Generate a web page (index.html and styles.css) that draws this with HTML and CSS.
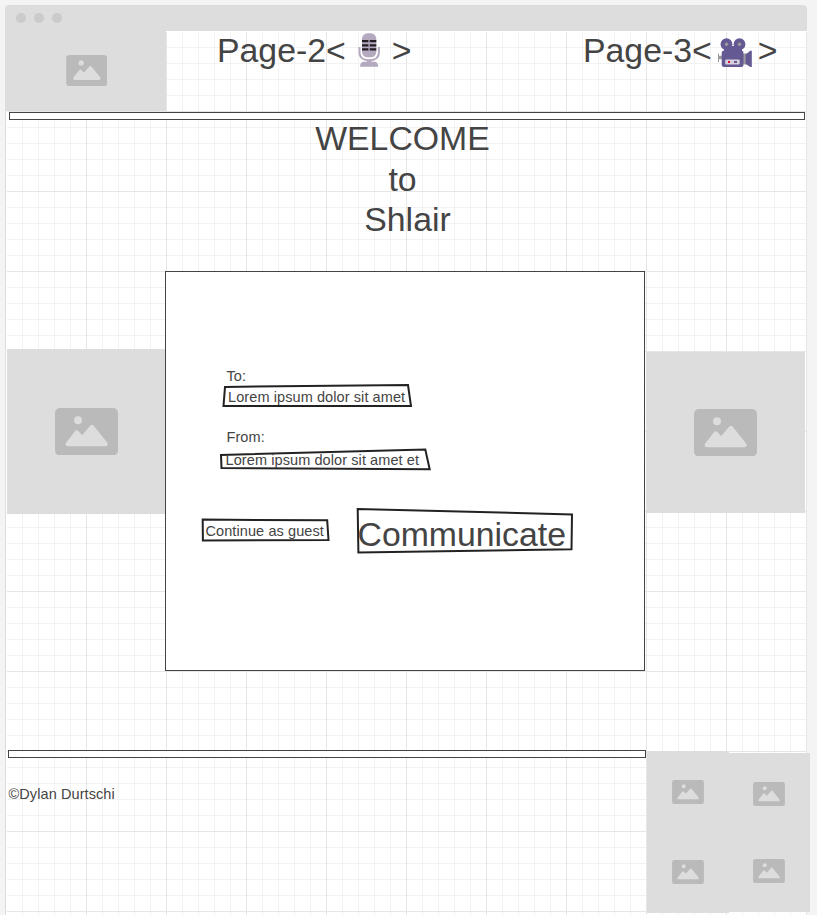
FILE: index.html
```html
<!DOCTYPE html>
<html lang="en">
<head>
<meta charset="utf-8">
<title>Shlair</title>
<link rel="stylesheet" href="styles.css">
</head>
<body>
<svg class="defs" width="0" height="0">
  <symbol id="picture" viewBox="0 0 63 47.5">
    <rect width="63" height="47.5" rx="5" fill="#bababa"/>
    <circle cx="23" cy="12.2" r="4" fill="#ddd"/>
    <path d="M12.8 36 L21.7 24.6 L27.2 30.400 L37 19 L50.600 36 Z" fill="#ddd" stroke="#ddd" stroke-width="4.400" stroke-linejoin="round"/>
  </symbol>
</svg>
<div class="window">
  <div class="titlebar"><i class="dot"></i><i class="dot"></i><i class="dot"></i></div>
  <div class="frame">
    <div class="canvas">
      <header class="header">
        <div class="image logo"><svg><use href="#picture"/></svg></div>
        <nav class="nav">
          <a class="link"><span>Page-2&lt;</span>
            <svg class="mic" width="22" height="34" viewBox="358 33 22 34">
              <rect x="362" y="33.300" width="14.300" height="24" rx="5.500" fill="#b4a9bf"/>
              <path d="M362 41.200h6.400m1.300 0h6.600M362 45.300h6.400m1.300 0h6.600M362 49.300h6.400m1.300 0h6.600" stroke="#231f24" stroke-width="2.200"/>
              <path d="M359.500 47v5.500c0 4.800 4 7.800 9.700 7.800s9.700-3 9.700-7.800V47" fill="none" stroke="#b4a9bf" stroke-width="2"/>
              <path d="M367 60h4.400v1.700h3.300c2 0 3.600 2 3.600 5H360c0-3 1.600-5 3.600-5H367z" fill="#b4a9bf"/>
            </svg>
            <span>&gt;</span></a>
          <a class="link"><span>Page-3&lt;</span>
            <svg class="camera" width="34" height="30" viewBox="718 38 34 30">
              <path d="M718 53.500h1v2.300h3v3.500h-3v2.700h-1zM743 54l3.500-1v12l-3.500-1z" fill="#9b9b9b"/>
              <path d="M724 46h18v6h-18z" fill="#655994"/>
              <circle cx="726.500" cy="44.200" r="5.900" fill="#655994"/>
              <circle cx="739.500" cy="44.200" r="5.900" fill="#655994"/>
              <circle cx="726.500" cy="44.200" r="1.700" fill="#9b9b9b"/>
              <circle cx="739.500" cy="44.200" r="1.700" fill="#9b9b9b"/>
              <rect x="721.700" y="50.500" width="21.800" height="16.500" rx="2.500" fill="#655994"/>
              <path d="M745.600 54.500l4.700-3.800h1.500v16.400h-1.500l-4.700-3.400z" fill="#655994"/>
              <rect x="725.200" y="59.500" width="14.500" height="5" rx="1" fill="#d5d0dc"/>
              <path d="M728 61h2v2h-2z" fill="#d6083b"/>
              <path d="M734 61h3v2h-3z" fill="#655994"/>
            </svg>
            <span>&gt;</span></a>
        </nav>
      </header>
      <div class="rule rule-top"></div>
      <h1 class="hero"><span class="welcome">WELCOME</span><span class="to">to</span><span class="name">Shlair</span></h1>
      <main class="main">
        <div class="image side-left"><svg><use href="#picture"/></svg></div>
        <form class="card">
          <label class="label label-to">To:</label>
          <div class="field field-to">
            <svg class="outline" viewBox="222 383 192 26"><path d="M225 386.900L408 385L411 406H223.500Z"/></svg>
            <span>Lorem ipsum dolor sit amet</span>
          </div>
          <label class="label label-from">From:</label>
          <div class="field field-from">
            <svg class="outline" viewBox="219 447 214 25"><path d="M221 454.900L425.300 449.600L429.700 469.300L221.500 468Z"/></svg>
            <span>Lorem ipsum dolor sit amet et</span>
          </div>
          <div class="actions">
            <div class="field guest">
              <svg class="outline" viewBox="201 517 130 26"><path d="M202.700 519.600L327.200 520.300L328.500 539.900L202.900 540.400Z"/></svg>
              <span>Continue as guest</span>
            </div>
            <div class="field communicate">
              <svg class="outline" viewBox="356 507 218 48"><path d="M357.700 509L572 514.400L571.500 549.200L358.400 552.600Z"/></svg>
              <span>Communicate</span>
            </div>
          </div>
        </form>
        <div class="image side-right"><svg><use href="#picture"/></svg></div>
      </main>
      <footer class="footer">
        <div class="legal">
          <div class="rule rule-bottom"></div>
          <p class="copyright">©Dylan Durtschi</p>
        </div>
        <div class="gallery gallery-a">
          <div class="image"><svg><use href="#picture"/></svg></div>
          <div class="image"><svg><use href="#picture"/></svg></div>
        </div>
        <div class="gallery gallery-b">
          <div class="image"><svg><use href="#picture"/></svg></div>
          <div class="image"><svg><use href="#picture"/></svg></div>
        </div>
      </footer>
    </div>
  </div>
</div>
</body>
</html>
```
FILE: styles.css
```css
* { box-sizing: border-box; }
html { overflow: hidden; }
body {
  margin: 0;
  height: 915px;
  overflow: hidden;
  background: #f4f4f4;
  color: #444;
  font-family: "Liberation Sans", Arial, sans-serif;
  font-size: 14.5px;
  letter-spacing: 0.09px;
}
svg { display: block; flex: none; }
.defs { position: absolute; }
.window { width: 802px; margin: 5px 0 0 5px; }
.titlebar {
  display: flex;
  align-items: center;
  gap: 8px;
  height: 26px;
  padding-left: 10.5px;
  border-radius: 4px 4px 0 0;
  background: #ddd;
}
.dot { width: 10px; height: 10px; border-radius: 50%; background: #cbcbcb; }
.frame {
  height: 884px;
  padding: 1px 0 0 1px;
  border-left: 1px solid #ddd;
  background: #fff;
}
.canvas {
  height: 883px;
  background:
    linear-gradient(to right, #e6e6e6 1px, transparent 1px) -1px -1px / 80px 80px,
    linear-gradient(to bottom, #e6e6e6 1px, transparent 1px) -1px -1px / 80px 80px,
    linear-gradient(to right, #f2f2f2 1px, transparent 1px) -1px -1px / 16px 16px,
    linear-gradient(to bottom, #f2f2f2 1px, transparent 1px) -1px -1px / 16px 16px,
    #fff;
}
.image {
  display: flex;
  align-items: center;
  justify-content: center;
  background: #ddd;
}
.image svg { width: 63px; height: 47.5px; }
.rule { height: 8px; border: 1px solid #444; background: #fff; }

.header { display: flex; height: 80px; }
.logo { width: 160px; height: 80px; margin: -1px 0 0 -1px; }
.logo svg { width: 41.5px; height: 31px; margin: -1px 0 0 1px; }
.nav { display: flex; font-size: 33.8px; line-height: 40px; letter-spacing: 0; }
.link { display: flex; margin-top: -2px; margin-left: 51px; width: 196px; color: inherit; }
.link + .link { margin-left: 170px; }
.mic { margin: 3px 12px 0 12px; }
.camera { margin: 8px 6px 0 6px; }
.rule-top { width: 796px; margin-left: 2px; }

.hero {
  display: flex;
  flex-direction: column;
  height: 151px;
  margin: 0;
  font-size: 33.8px;
  font-weight: 400;
  line-height: 40px;
  letter-spacing: 0;
  text-align: center;
}
.hero span { width: 791px; }
.welcome { margin-top: -2px; }
.to { margin-top: 1px; }
.name { padding-left: 10px; }

.main { display: flex; height: 400px; }
.side-left { width: 158px; height: 165px; margin-top: 78px; }
.side-right { width: 159px; height: 161.5px; margin: 80.5px 0 0 1px; }
.card {
  width: 480px;
  height: 400px;
  padding: 96px 0 0 36px;
  border: 1px solid #444;
  background: #fff;
}
.label { display: block; height: 16px; margin-left: 24.5px; line-height: 16px; }
.field { position: relative; white-space: nowrap; }
.field span { position: relative; display: block; }
.outline { position: absolute; inset: 0; width: 100%; height: 100%; }
.outline path { fill: none; stroke: #222; stroke-width: 2; }
.field-to { width: 192px; height: 26px; margin: -1px 0 0 20px; padding: 6px 0 0 6px; line-height: 16px; }
.label-from { margin-top: 20px; }
.field-from { width: 214px; height: 25px; margin: 2px 0 0 17px; padding: 5px 0 0 6.5px; line-height: 16px; }
.actions { display: flex; align-items: flex-start; margin-top: 35px; }
.guest { width: 130px; height: 26px; margin: 10px 0 0 -1px; padding: 6px 0 0 4.5px; line-height: 16px; }
.communicate { width: 218px; height: 48px; margin-left: 25px; padding: 7px 0 0 1.5px; font-size: 33.8px; line-height: 40px; letter-spacing: 0; }

.footer { display: flex; align-items: flex-start; height: 165px; margin-top: 79px; }
.legal { width: 639px; margin-right: 1px; }
.rule-bottom { width: 638px; margin-left: 1px; }
.copyright { margin: 28px 0 0 1.5px; line-height: 16px; }
.gallery { flex: none; margin-top: 1px; }
.gallery-a { width: 82px; height: 162px; }
.gallery-a .image { height: 82px; }
.gallery-a .image + .image { height: 80px; padding-bottom: 2px; }
.gallery-b { width: 81px; height: 159px; margin-top: 3px; }
.gallery-b .image { height: 82px; padding-right: 1px; }
.gallery-b .image + .image { height: 77px; padding-bottom: 5px; }
.gallery .image svg { width: 32px; height: 24px; }
```
